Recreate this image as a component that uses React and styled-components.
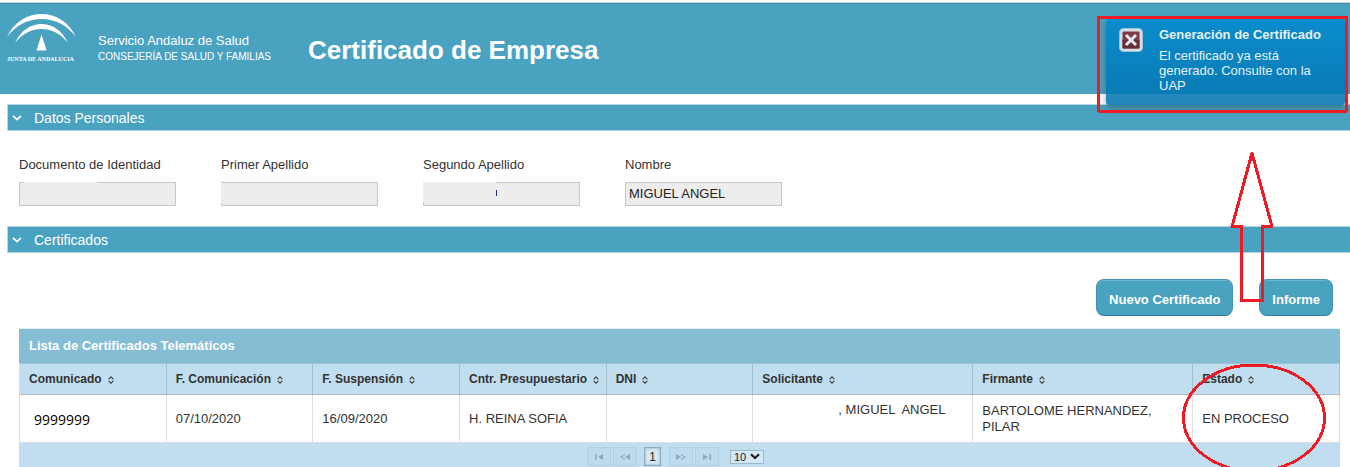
import styled, { createGlobalStyle } from 'styled-components';

const fields = [
  { id: 'documento', label: 'Documento de Identidad', value: '', mask: 'top' },
  { id: 'apellido1', label: 'Primer Apellido', value: '', mask: 'left' },
  { id: 'apellido2', label: 'Segundo Apellido', value: '', mask: 'corner' },
  { id: 'nombre', label: 'Nombre', value: 'MIGUEL ANGEL' },
];

const columns = [
  { title: 'Comunicado' },
  { title: 'F. Comunicación' },
  { title: 'F. Suspensión' },
  { title: 'Cntr. Presupuestario' },
  { title: 'DNI' },
  { title: 'Solicitante', wide: true },
  { title: 'Firmante', wide: true },
  { title: 'Estado' },
];

const App = () => {
  return (
    <Page>
      <GlobalStyle />
      <Header>
        <Logo />
        <Organism>
          <OrganismName>Servicio Andaluz de Salud</OrganismName>
          <Department>CONSEJERÍA DE SALUD Y FAMILIAS</Department>
        </Organism>
        <Title>Certificado de Empresa</Title>
      </Header>

      <Main>
        <SectionBar type="button">
          <Chevron />
          Datos Personales
        </SectionBar>
        <Fields>
          {fields.map(({ id, label, value, mask }) => (
            <Field key={id}>
              <Label htmlFor={id}>{label}</Label>
              <InputWrap>
                <Input id={id} type="text" defaultValue={value} readOnly />
                {mask && <Mask $kind={mask} />}
              </InputWrap>
            </Field>
          ))}
        </Fields>

        <SectionBar type="button">
          <Chevron />
          Certificados
        </SectionBar>
        <Actions>
          <ActionButton type="button">Nuevo Certificado</ActionButton>
          <ActionButton type="button">Informe</ActionButton>
        </Actions>

        <TableWrap>
          <Table>
            <Caption>Lista de Certificados Telemáticos</Caption>
            <thead>
              <tr>
                {columns.map(({ title, wide }) => (
                  <HeadCell key={title} $wide={wide} scope="col">
                    {title}
                    <SortIcon />
                  </HeadCell>
                ))}
              </tr>
            </thead>
            <tbody>
              <tr>
                <Cell>
                  <Code>9999999</Code>
                </Cell>
                <Cell>07/10/2020</Cell>
                <Cell>16/09/2020</Cell>
                <Cell>H. REINA SOFIA</Cell>
                <Cell />
                <ApplicantCell>{', MIGUEL  ANGEL'}</ApplicantCell>
                <Cell>BARTOLOME HERNANDEZ, PILAR</Cell>
                <Cell>EN PROCESO</Cell>
              </tr>
            </tbody>
          </Table>
          <Paginator aria-label="Paginación">
            <PageButton type="button" aria-label="Primera" disabled>
              <svg width="8" height="6" viewBox="0 0 8 6">
                <path d="M0 0h1.500v6H0zM8 0v6L3 3z" />
              </svg>
            </PageButton>
            <PageButton type="button" aria-label="Anterior" disabled>
              <svg width="10" height="6" viewBox="0 0 10 6">
                <path d="M10 0v6L5 3zM5 0v1.200L2 3l3 1.800V6L0 3z" />
              </svg>
            </PageButton>
            <CurrentPage type="button" aria-current="page">
              1
            </CurrentPage>
            <PageButton type="button" aria-label="Siguiente" disabled>
              <svg width="10" height="6" viewBox="0 0 10 6">
                <path d="M0 0v6l5-3zM5 0v1.200L8 3 5 4.800V6l5-3z" />
              </svg>
            </PageButton>
            <PageButton type="button" aria-label="Última" disabled>
              <svg width="8" height="6" viewBox="0 0 8 6">
                <path d="M6.500 0H8v6H6.500zM0 0v6l5-3z" />
              </svg>
            </PageButton>
            <SelectWrap>
              <PageSize aria-label="Filas por página" defaultValue="10">
                <option>10</option>
                <option>20</option>
                <option>50</option>
              </PageSize>
              <SelectArrow width="10" height="7" viewBox="0 0 10 7">
                <path
                  d="M1 1.200 5 5l4-3.800"
                  fill="none"
                  stroke="#222"
                  strokeWidth="2.200"
                />
              </SelectArrow>
            </SelectWrap>
          </Paginator>
        </TableWrap>
      </Main>

      <Toast role="alert">
        <ErrorIcon />
        <div>
          <ToastTitle>Generación de Certificado</ToastTitle>
          <ToastText>
            El certificado ya está generado. Consulte con la UAP
          </ToastText>
        </div>
      </Toast>
      <Marks />
    </Page>
  );
};

const Logo = () => (
  <LogoWrap>
    <svg width="69" height="38" viewBox="0 0 69 38" fill="#fff">
      <path d="M0 23C7 8 20 0 34.500 0S62 8 69 23C60 11 48 5 34.500 5S9 11 0 23z" />
      <path d="M8 29C14 16 24 10 34.500 10S55 16 61 29C53 19 44 15 34.500 15S16 19 8 29z" />
      <path d="M34.500 20.500 39.500 36.500h-10z" />
    </svg>
    <LogoText>JUNTA DE ANDALUCIA</LogoText>
  </LogoWrap>
);

const Chevron = () => (
  <svg width="10" height="6" viewBox="0 0 10 6" aria-hidden="true">
    <path d="M1 .8 5 4.600 9 .8" fill="none" stroke="#fff" strokeWidth="1.700" />
  </svg>
);

const SortIcon = () => (
  <SortSvg width="6" height="8" viewBox="0 0 6 8" aria-hidden="true">
    <path
      d="M.6 3.300 3 .9l2.400 2.400M.6 4.800 3 7.200l2.400-2.400"
      fill="none"
      stroke="#444"
      strokeWidth="1.200"
    />
  </SortSvg>
);

const ErrorIcon = () => (
  <ErrorSvg width="24" height="24" viewBox="0 0 24 24" aria-hidden="true">
    <rect x=".5" y=".5" width="23" height="23" rx="4" fill="#e6ebee" stroke="#b4c6d2" />
    <rect x="3.500" y="3.500" width="17" height="17" rx="1" fill="#8b2a32" />
    <path d="M3.500 12h17v7.500a1 1 0 0 1-1 1h-15a1 1 0 0 1-1-1z" fill="#701c25" />
    <path d="m7 7 10 10m0-10L7 17" stroke="#f4f6f7" strokeWidth="3" />
  </ErrorSvg>
);

// hand-drawn red marks over the notice, the button and the status
const Marks = () => (
  <MarksSvg width="260" height="467" viewBox="0 0 260 467" aria-hidden="true">
    <rect x="8.500" y="17.500" width="248" height="93.500" />
    <path d="M162 153 142 226.500h9.500v74h21v-74h9.500z" />
    <ellipse cx="164" cy="418" rx="70.500" ry="53" />
  </MarksSvg>
);

const GlobalStyle = createGlobalStyle`
  *,
  *::before,
  *::after {
    box-sizing: border-box;
  }

  body {
    margin: 0;
    background: #fff;
    color: #333;
    font-family: 'Liberation Sans', Arial, sans-serif;
    font-size: 13px;
    line-height: 16px;
  }

  button,
  input,
  select {
    font: inherit;
  }
`;

const Page = styled.div`
  position: relative;
  padding-top: 2px;
`;

const Header = styled.header`
  display: flex;
  align-items: center;
  height: 92px;
  padding-left: 7px;
  border-top: 1px solid #cfd8dc;
  background: #4aa2c1;
  box-shadow: inset 0 1px #3d8ca8;
  color: #fff;
`;

const LogoWrap = styled.div`
  display: flex;
  flex-direction: column;
  align-self: flex-start;
  width: 91px;
  padding-top: 11px;
`;

const LogoText = styled.span`
  margin-top: 2px;
  font-family: 'Liberation Serif', serif;
  font-size: 6px;
  font-weight: bold;
  line-height: 10px;
  white-space: nowrap;
`;

const Organism = styled.div`
  width: 210px;
`;

const OrganismName = styled.div`
  font-size: 13px;
`;

const Department = styled.div`
  font-size: 10px;
`;

const Title = styled.h1`
  margin: 0;
  padding-top: 2px;
  font-size: 26px;
  line-height: 32px;
`;

const Main = styled.main`
  padding: 10px 0 0 7px;
`;

const SectionBar = styled.button`
  display: flex;
  align-items: center;
  gap: 12px;
  width: 100%;
  height: 27px;
  padding: 0 4px;
  border: 1px solid #b3d8e5;
  border-right: 0;
  background: #4aa2c1;
  color: #fff;
  font-size: 14px;
  text-align: left;
`;

const Fields = styled.div`
  display: flex;
  gap: 45px;
  padding: 26px 12px 20px;
`;

const Field = styled.div`
  display: flex;
  flex-direction: column;
  gap: 9px;
  width: 157px;
`;

const Label = styled.label`
  white-space: nowrap;
`;

const InputWrap = styled.div`
  position: relative;
`;

const Input = styled.input`
  display: block;
  width: 100%;
  height: 24px;
  padding: 0 3px 1px;
  border: 1px solid #c8c8c8;
  border-radius: 0;
  background: #ededed;
  color: #222;
`;

const maskBoxes = {
  top: 'left: 5px; width: 73px; height: 2px;',
  left: 'left: 0; top: 1px; width: 2px; height: 20px;',
  corner: 'left: 0; width: 73px; height: 20px;',
};

const Mask = styled.span`
  position: absolute;
  top: 0;
  background: #ededed;
  ${({ $kind }) => maskBoxes[$kind]}

  &::after {
    content: '';
    position: absolute;
    left: 100%;
    top: 8px;
    width: 1px;
    height: 6px;
    background: #1c2f86;
    display: ${({ $kind }) => ($kind === 'corner' ? 'block' : 'none')};
  }
`;

const Actions = styled.div`
  display: flex;
  justify-content: flex-end;
  gap: 26px;
  padding: 26px 17px 12px;
`;

const ActionButton = styled.button`
  height: 37px;
  padding: 4px 12px 0;
  border: 1px solid #3f93b0;
  border-bottom-color: #2f7d99;
  border-radius: 8px;
  background: #4aa2c1;
  box-shadow: inset 0 1px #6cb8d2;
  color: #fff;
  font-weight: bold;
`;

const TableWrap = styled.div`
  margin: 0 10px 0 12px;
  border-top: 1px solid #e6eef1;
`;

const Table = styled.table`
  width: 100%;
  table-layout: fixed;
  border-spacing: 0;
  border-left: 1px solid #ddd;
`;

const Caption = styled.caption`
  padding: 9px 10px;
  background: #84bdd4;
  color: #fff;
  font-weight: bold;
  text-align: left;
`;

const HeadCell = styled.th`
  width: ${({ $wide }) => ($wide ? '16.66%' : '11.11%')};
  height: 32px;
  padding: 0 0 0 9px;
  border-top: 1px solid #a3c4d4;
  border-right: 1px solid #a3c0cf;
  border-bottom: 1px solid #b0b6b9;
  background: #c0def0;
  font-size: 12px;
  text-align: left;
  white-space: nowrap;
`;

const SortSvg = styled.svg`
  margin-left: 6px;
  vertical-align: -1px;
`;

const Cell = styled.td`
  height: 48px;
  padding: 7px 9px;
  border-right: 1px solid #ddd;
  border-bottom: 1px solid #ddd;
`;

const ApplicantCell = styled(Cell)`
  padding-left: 85px;
  vertical-align: top;
  white-space: pre;
`;

const Code = styled.span`
  display: block;
  padding: 2px 5px 0;
  color: #000;
  font-family: 'Open Sans', sans-serif;
  font-size: 14px;
`;

const Paginator = styled.nav`
  display: flex;
  justify-content: center;
  align-items: center;
  gap: 2px;
  height: 24px;
  padding: 4px 8px 1px 0;
  background: #c0def0;
`;

const PageButton = styled.button`
  display: flex;
  justify-content: center;
  align-items: center;
  width: 24px;
  height: 19px;
  padding: 0;
  border: 1px solid #b2d1e2;
  background: #bddbed;

  svg {
    fill: #8ea9b9;
  }
`;

const CurrentPage = styled.button`
  width: 17px;
  height: 19px;
  margin: 0 6px 0 5px;
  padding: 0;
  border: 1px solid #92abb8;
  background: #d6eaf6;
  box-shadow: inset 0 0 3px #8fabba;
  color: #222;
  font-size: 12px;
`;

const SelectWrap = styled.span`
  position: relative;
  display: flex;
  margin-left: 9px;
`;

const PageSize = styled.select`
  width: 34px;
  height: 14px;
  padding: 0 3px;
  border: 1px solid #9fb9c7;
  border-radius: 0;
  appearance: none;
  background: #d2e8f5;
  color: #222;
  font-size: 11px;
  line-height: 12px;
`;

const SelectArrow = styled.svg`
  position: absolute;
  right: 4px;
  top: 3px;
  pointer-events: none;
`;

const Toast = styled.aside`
  position: absolute;
  top: 19px;
  right: 5px;
  display: flex;
  gap: 16px;
  width: 239px;
  height: 86px;
  padding: 8px 19px 0 13px;
  border-radius: 3px;
  background: linear-gradient(#0089cf, #0073b0);
  box-shadow: 0 3px 8px rgba(0, 0, 0, 0.35);
  color: #fff;
  opacity: 0.86;
`;

const ErrorSvg = styled.svg`
  flex: none;
  margin-top: 1px;
`;

const ToastTitle = styled.strong`
  display: block;
  margin-bottom: 6px;
  line-height: 15px;
  white-space: nowrap;
`;

const ToastText = styled.p`
  margin: 0;
  line-height: 15px;
`;

const MarksSvg = styled.svg`
  position: absolute;
  top: 0;
  right: 0;
  fill: none;
  stroke: #ed1c24;
  stroke-width: 3px;
  stroke-linejoin: round;
  shape-rendering: crispEdges;
  pointer-events: none;
`;

export default App;
